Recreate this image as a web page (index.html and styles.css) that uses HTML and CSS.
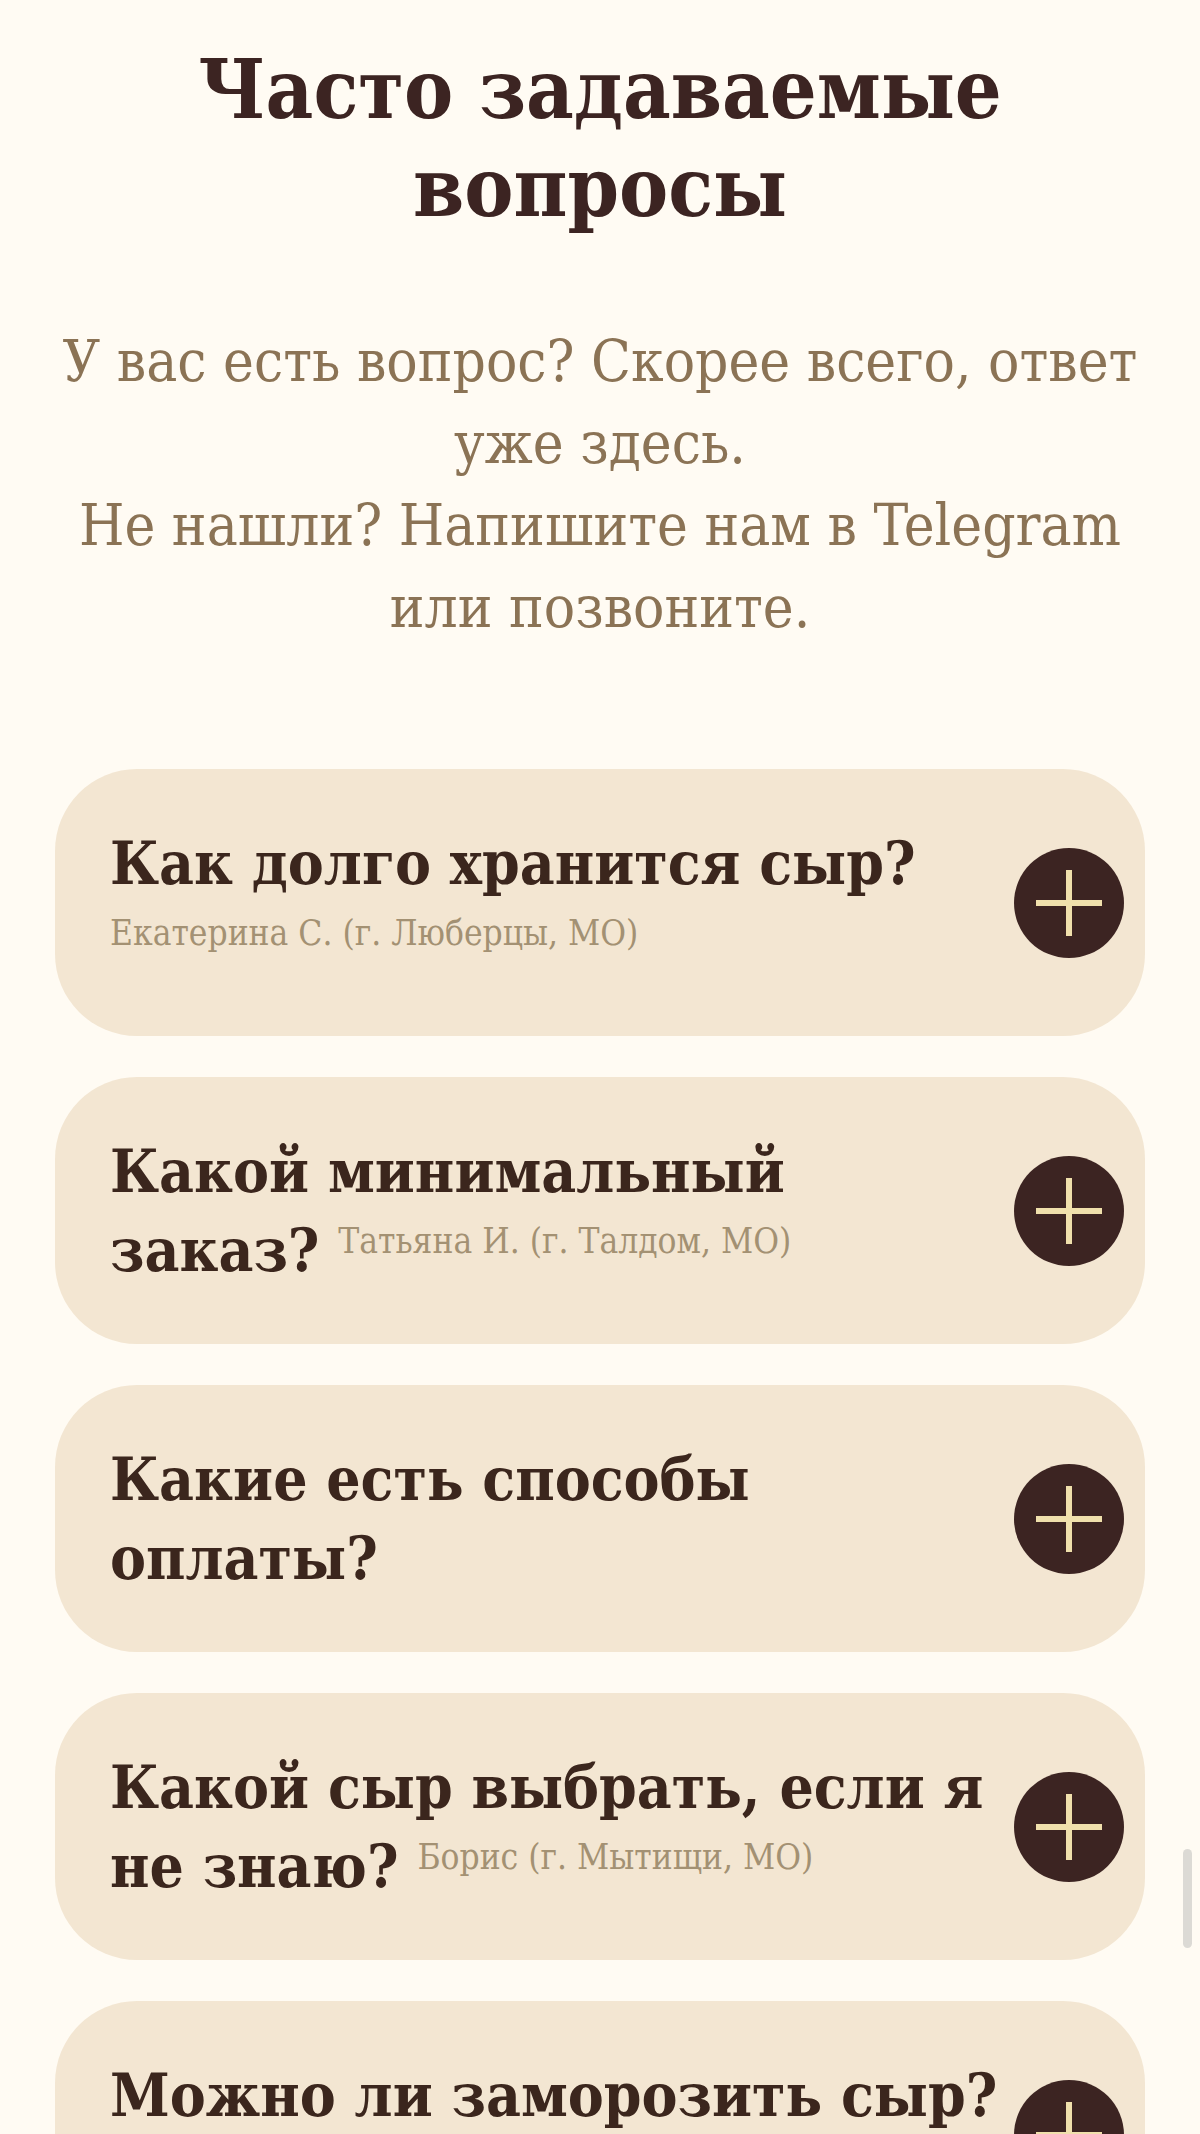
FILE: index.html
```html
<!DOCTYPE html>
<html lang="ru">
<head>
  <meta charset="UTF-8">
  <meta name="viewport" content="width=device-width, initial-scale=1.0">
  <title>Часто задаваемые вопросы</title>
  <link rel="stylesheet" href="styles.css">
</head>
<body>
  <main class="faq">
    <h1 class="faq-title">Часто задаваемые вопросы</h1>
    <p class="faq-intro">У вас есть вопрос? Скорее всего, ответ уже здесь.<br>Не нашли? Напишите нам в Telegram или позвоните.</p>

    <div class="faq-list">
      <div class="faq-item">
        <h2 class="question" id="q1">Как долго хранится сыр? <span class="author">Екатерина С. (г. Люберцы, МО)</span></h2>
        <button class="toggle" type="button" aria-labelledby="q1">
          <svg class="plus" viewBox="0 0 66 66"><path d="M33 0v66M0 33h66"/></svg>
        </button>
      </div>

      <div class="faq-item">
        <h2 class="question" id="q2">Какой минимальный заказ? <span class="author">Татьяна И. (г. Талдом, МО)</span></h2>
        <button class="toggle" type="button" aria-labelledby="q2">
          <svg class="plus" viewBox="0 0 66 66"><path d="M33 0v66M0 33h66"/></svg>
        </button>
      </div>

      <div class="faq-item">
        <h2 class="question" id="q3">Какие есть способы оплаты?</h2>
        <button class="toggle" type="button" aria-labelledby="q3">
          <svg class="plus" viewBox="0 0 66 66"><path d="M33 0v66M0 33h66"/></svg>
        </button>
      </div>

      <div class="faq-item">
        <h2 class="question" id="q4">Какой сыр выбрать, если я не знаю? <span class="author">Борис (г. Мытищи, МО)</span></h2>
        <button class="toggle" type="button" aria-labelledby="q4">
          <svg class="plus" viewBox="0 0 66 66"><path d="M33 0v66M0 33h66"/></svg>
        </button>
      </div>

      <div class="faq-item">
        <h2 class="question" id="q5">Можно ли заморозить сыр?</h2>
        <button class="toggle" type="button" aria-labelledby="q5">
          <svg class="plus" viewBox="0 0 66 66"><path d="M33 0v66M0 33h66"/></svg>
        </button>
      </div>
    </div>
  </main>
  <div class="scroll-thumb"></div>
</body>
</html>
```
FILE: styles.css
```css
* {
  box-sizing: border-box;
}
body {
  margin: 0;
  background-color: #fffbf3;
  font-family: "DejaVu Serif Condensed", "Liberation Serif", serif;
}
.faq {
  padding: 40px 55px 0;
}
.faq-title {
  margin: 0 0 84px;
  color: #3c2422;
  font-size: 82px;
  line-height: 98px;
  text-align: center;
}
.faq-intro {
  margin: 0 0 121px;
  color: #8b7355;
  font-size: 58px;
  line-height: 82px;
  text-align: center;
}
.faq-list {
  display: flex;
  flex-direction: column;
  gap: 41px;
}
.faq-item {
  display: flex;
  align-items: center;
  gap: 10px;
  min-height: 267px;
  padding-right: 21px;
  border-radius: 82px;
  background-color: #f3e6d2;
}
.question {
  flex: 1;
  align-self: flex-start;
  margin: 0;
  padding: 55px 0 54px 55px;
  color: #3b261d;
  font-size: 60px;
  line-height: 79px;
}
.author {
  display: inline-block;
  color: #a39173;
  font-size: 35px;
  font-weight: normal;
  line-height: 35px;
  vertical-align: 18px;
}
.toggle {
  display: flex;
  flex: none;
  align-items: center;
  justify-content: center;
  width: 110px;
  height: 110px;
  padding: 0;
  border: none;
  border-radius: 50%;
  background-color: #3c2422;
  cursor: pointer;
}
.plus {
  width: 66px;
  height: 66px;
  fill: none;
  stroke: #f0e0ac;
  stroke-width: 6;
}
/* thin overlay scroll indicator */
.scroll-thumb {
  position: fixed;
  top: 1849px;
  right: 8px;
  width: 9px;
  height: 99px;
  border-radius: 5px;
  background-color: #dcdad5;
}
```
